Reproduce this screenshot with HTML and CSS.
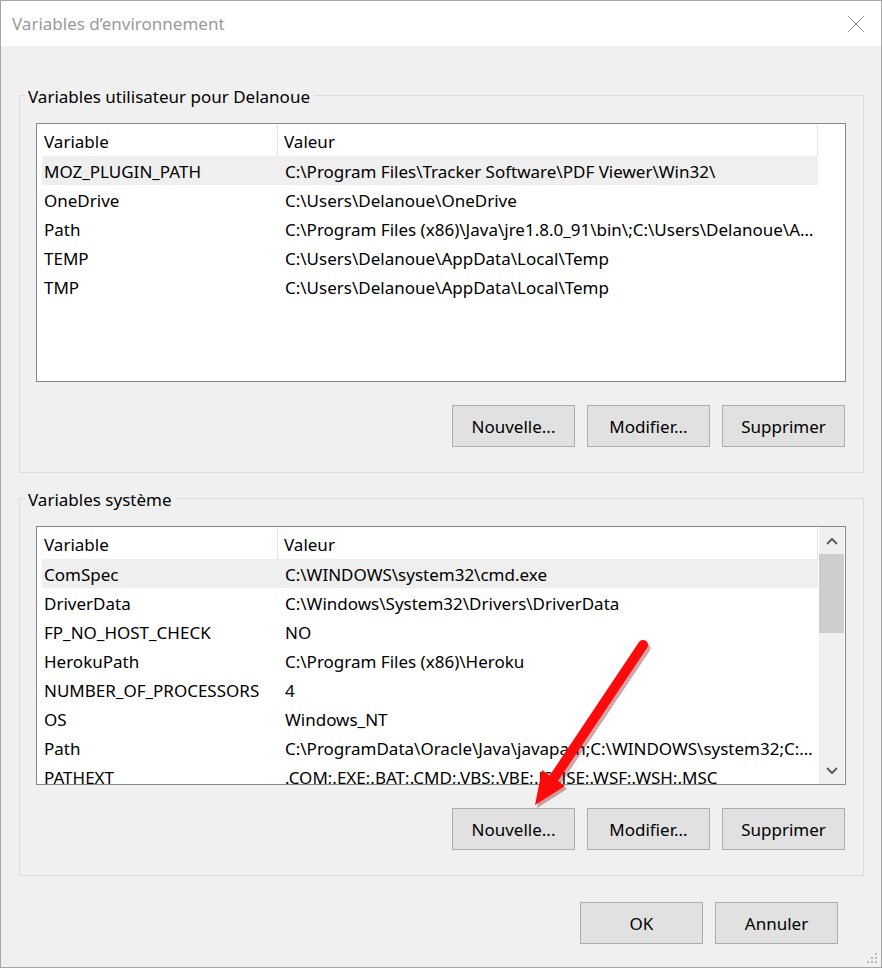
FILE: index.html
```html
<!DOCTYPE html>
<html lang="fr">
<head>
<meta charset="utf-8">
<title>Variables d’environnement</title>
<link rel="stylesheet" href="styles.css">
</head>
<body>
<div class="window">
  <div class="titlebar">
    <span class="title">Variables d’environnement</span>
    <svg class="close" width="16" height="16" viewBox="0 0 16 16"><path d="M0.5 0.5 L15.5 15.5 M15.5 0.5 L0.5 15.5" stroke="#8a8a8a" stroke-width="1" fill="none"/></svg>
  </div>
  <div class="content">
    <div class="group">
      <span class="group-title">Variables utilisateur pour Delanoue</span>
      <div class="list">
        <div class="table">
          <div class="row head"><span class="c1">Variable</span><span class="c2">Valeur</span></div>
          <div class="row sel"><span class="c1">MOZ_PLUGIN_PATH</span><span class="c2">C:\Program Files\Tracker Software\PDF Viewer\Win32\</span></div>
          <div class="row"><span class="c1">OneDrive</span><span class="c2">C:\Users\Delanoue\OneDrive</span></div>
          <div class="row"><span class="c1">Path</span><span class="c2">C:\Program Files (x86)\Java\jre1.8.0_91\bin\;C:\Users\Delanoue\AppData\Local\Microsoft\WindowsApps;</span></div>
          <div class="row"><span class="c1">TEMP</span><span class="c2">C:\Users\Delanoue\AppData\Local\Temp</span></div>
          <div class="row"><span class="c1">TMP</span><span class="c2">C:\Users\Delanoue\AppData\Local\Temp</span></div>
        </div>
      </div>
      <div class="buttons">
        <button class="btn">Nouvelle...</button>
        <button class="btn">Modifier...</button>
        <button class="btn">Supprimer</button>
      </div>
    </div>

    <div class="group group2">
      <span class="group-title">Variables système</span>
      <div class="list">
        <div class="table">
          <div class="row head"><span class="c1">Variable</span><span class="c2">Valeur</span></div>
          <div class="row sel"><span class="c1">ComSpec</span><span class="c2">C:\WINDOWS\system32\cmd.exe</span></div>
          <div class="row"><span class="c1">DriverData</span><span class="c2">C:\Windows\System32\Drivers\DriverData</span></div>
          <div class="row"><span class="c1">FP_NO_HOST_CHECK</span><span class="c2">NO</span></div>
          <div class="row"><span class="c1">HerokuPath</span><span class="c2">C:\Program Files (x86)\Heroku</span></div>
          <div class="row"><span class="c1">NUMBER_OF_PROCESSORS</span><span class="c2">4</span></div>
          <div class="row"><span class="c1">OS</span><span class="c2">Windows_NT</span></div>
          <div class="row"><span class="c1">Path</span><span class="c2">C:\ProgramData\Oracle\Java\javapath;C:\WINDOWS\system32;C:\WINDOWS;</span></div>
          <div class="row"><span class="c1">PATHEXT</span><span class="c2">.COM;.EXE;.BAT;.CMD;.VBS;.VBE;.JS;.JSE;.WSF;.WSH;.MSC</span></div>
        </div>
        <div class="scrollbar">
          <div class="sb-btn">
            <svg width="12" height="8" viewBox="0 0 12 8"><path d="M1 7 L6 2 L11 7" stroke="#606060" stroke-width="2" fill="none"/></svg>
          </div>
          <div class="sb-track"><div class="sb-thumb"></div></div>
          <div class="sb-btn">
            <svg width="12" height="8" viewBox="0 0 12 8"><path d="M1 1 L6 6 L11 1" stroke="#606060" stroke-width="2" fill="none"/></svg>
          </div>
        </div>
      </div>
      <div class="buttons">
        <button class="btn">Nouvelle...</button>
        <button class="btn">Modifier...</button>
        <button class="btn">Supprimer</button>
      </div>
    </div>

    <div class="buttons footer">
      <button class="btn">OK</button>
      <button class="btn">Annuler</button>
    </div>
  </div>
  <svg class="grip" width="12" height="12" viewBox="0 0 12 12">
    <rect x="8" y="0" width="2" height="2" fill="#b8b8b8"/>
    <rect x="4" y="4" width="2" height="2" fill="#b8b8b8"/>
    <rect x="8" y="4" width="2" height="2" fill="#b8b8b8"/>
    <rect x="0" y="8" width="2" height="2" fill="#b8b8b8"/>
    <rect x="4" y="8" width="2" height="2" fill="#b8b8b8"/>
    <rect x="8" y="8" width="2" height="2" fill="#b8b8b8"/>
  </svg>
  <svg class="arrow" width="882" height="968" viewBox="0 0 882 968">
    <line x1="645" y1="648" x2="556" y2="781" stroke="#7a0000" stroke-opacity="0.35" stroke-width="11" stroke-linecap="round"/>
    <polygon points="537,808 567,789 544,773" fill="#7a0000" fill-opacity="0.35"/>
    <line x1="643" y1="645" x2="554" y2="778" stroke="#ff0a0a" stroke-width="10" stroke-linecap="round"/>
    <polygon points="535,805 565,786 542,770" fill="#ff0a0a"/>
  </svg>
</div>
</body>
</html>
```

FILE: styles.css
```css
* { box-sizing: border-box; }
html, body { margin: 0; padding: 0; background: #f0f0f0; }
body {
  font-family: "Noto Sans", "Open Sans", "DejaVu Sans", sans-serif;
  font-size: 17px;
  color: #000;
}
.window {
  position: relative;
  width: 882px;
  height: 968px;
  border: 1px solid #a6a6a6;
  background: #f0f0f0;
  overflow: hidden;
}
.titlebar {
  height: 45px;
  background: #fff;
  display: flex;
  align-items: center;
  justify-content: space-between;
  padding: 0 17px 0 11px;
}
.title {
  color: #9a9a9a;
  font-size: 17px;
}
.close { display: block; margin-top: 1px; }
.content {
  padding: 49px 17px 0 18px;
}
.group {
  position: relative;
  border: 1px solid #dcdcdc;
  padding: 27px 17px 25px 16px;
}
.group2 { margin-top: 25px; }
.group-title {
  position: absolute;
  top: -11px;
  left: 5px;
  padding: 0 4px 0 3px;
  background: #f0f0f0;
  line-height: 24px;
}
.list {
  height: 259px;
  border: 1px solid #828790;
  background: #fff;
  display: flex;
  overflow: hidden;
}
.table {
  width: 781px;
  flex: none;
}
.row {
  display: flex;
  height: 29px;
  align-items: center;
  margin-left: 5px;
  white-space: nowrap;
}
.row > span { padding-top: 2px; }
.row.head {
  height: 32px;
  margin-left: 0;
}
.row.sel { background: #efefef; }
.c1 {
  width: 236px;
  padding-left: 2px;
  flex: none;
  overflow: hidden;
}
.c2 {
  flex: 1;
  min-width: 0;
  padding-left: 7px;
  padding-right: 4px;
  overflow: hidden;
  text-overflow: ellipsis;
}
.row.head > span {
  height: 32px;
  line-height: 32px;
  padding-top: 1px;
  border-right: 1px solid #e5e5e5;
  margin-top: 1px;
}
.head .c1 {
  width: 241px;
  padding-left: 7px;
}
.head .c2 {
  padding-left: 6px;
}
.scrollbar {
  margin-left: 1px;
  width: 25px;
  background: #f0f0f0;
  display: flex;
  flex-direction: column;
}
.sb-btn {
  height: 27px;
  display: flex;
  align-items: center;
  justify-content: center;
  flex: none;
}
.sb-track { flex: 1; }
.sb-thumb {
  height: 79px;
  background: #cdcdcd;
}
.buttons {
  display: flex;
  justify-content: flex-end;
  gap: 12px;
  margin-top: 23px;
  padding-right: 1px;
}
.btn {
  width: 123px;
  height: 42px;
  background: #e1e1e1;
  border: 1px solid #adadad;
  font-family: inherit;
  font-size: 17px;
  color: #000;
  padding: 0;
}
.footer {
  margin-top: 26px;
  padding-right: 26px;
}
.grip {
  position: absolute;
  right: 2px;
  bottom: 2px;
}
.arrow {
  position: absolute;
  left: -1px;
  top: -1px;
  pointer-events: none;
}
```
